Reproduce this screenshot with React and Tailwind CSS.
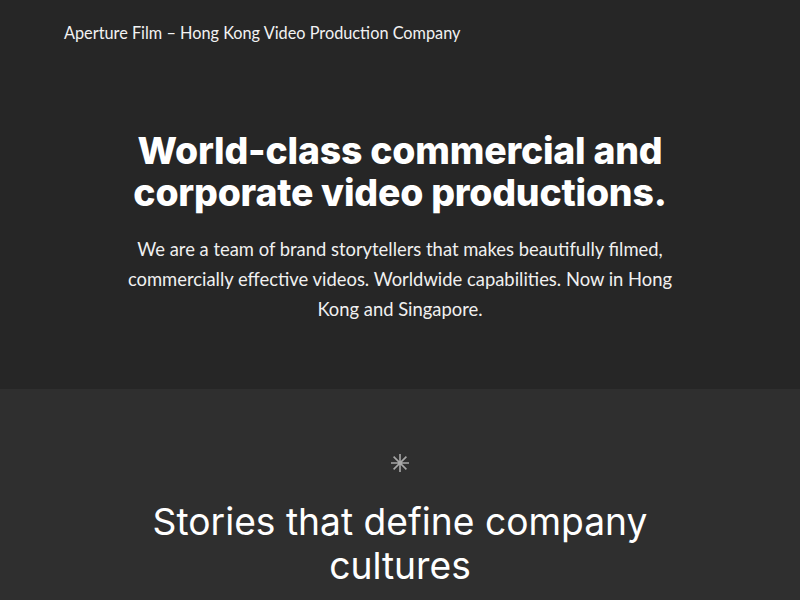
import React from 'react';

const Asterisk = () => (
  <svg width="20" height="20" viewBox="0 0 20 20" className="text-[#a8a8a8]" fill="none" stroke="currentColor" strokeWidth="1.6">
    <path d="M10 1v18M1 10h18M3.6 3.6l12.8 12.8M16.4 3.6L3.6 16.4" />
  </svg>
);

export default function App() {
  return (
    <div className="min-h-screen bg-[#2f2f2f] text-white">
      {/* Hero */}
      <section className="bg-[#262626] h-[389px] flex flex-col">
        <header className="px-16 pt-[23px] font-['Lato',sans-serif] text-[16.3px] leading-5 text-[#f2f2f2]">
          Aperture Film – Hong Kong Video Production Company
        </header>
        <div className="flex flex-col items-center text-center mt-[87px] px-8">
          <h1 className="font-['Inter',sans-serif] font-extrabold text-[37.4px] leading-[42px] tracking-[-0.2px] max-w-[580px]">
            World-class commercial and corporate video productions.
          </h1>
          <p className="mt-[20px] font-['Lato',sans-serif] text-[18.4px] leading-[30px] text-[#f0f0f0] max-w-[580px]">
            We are a team of brand storytellers that makes beautifully filmed, commercially effective videos. Worldwide capabilities. Now in Hong Kong and Singapore.
          </p>
        </div>
      </section>

      {/* Stories */}
      <section className="flex flex-col items-center text-center pt-[64px] px-8">
        <Asterisk />
        <h2 className="mt-[27px] font-['Inter',sans-serif] font-normal text-[37.2px] leading-[44px] max-w-[540px]">
          Stories that define company cultures
        </h2>
      </section>
    </div>
  );
}
